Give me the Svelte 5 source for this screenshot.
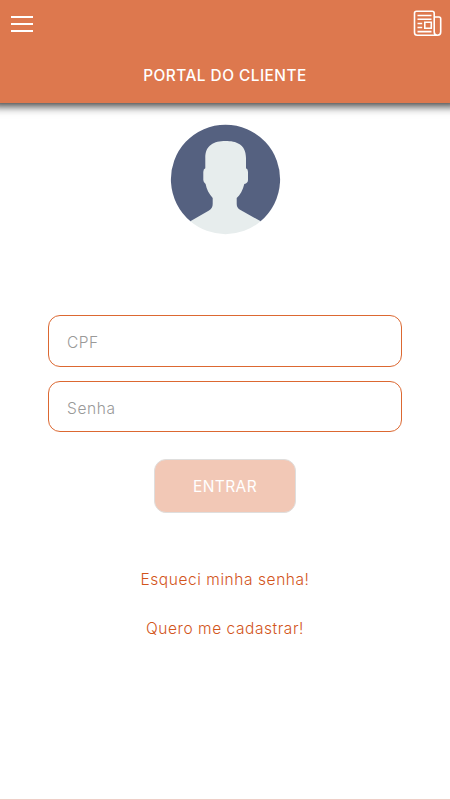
<script>
    let cpf = '';
    let senha = '';
    $: disabled = !cpf || !senha;
</script>

<style>
    :global(body) {
        background-color: #fff;
    }
    .portal {
        box-sizing: border-box;
        height: 800px;
        display: flex;
        flex-direction: column;
        align-items: center;
        border-bottom: 1px solid #efcdc6;
        font-family: Inter, "Open Sans", sans-serif;
        font-size: 15.5px;
    }
    header {
        width: 100%;
        height: 103px;
        background-color: #dd784e;
        box-shadow: 0 -6px 9px 9px rgba(0, 0, 0, 0.8);
        color: #fff;
    }
    .bar {
        box-sizing: border-box;
        height: 48px;
        display: flex;
        justify-content: space-between;
        padding: 10px 8px 0 11px;
    }
    button {
        font: inherit;
        color: inherit;
        background: none;
        border: none;
        padding: 0;
    }
    .bar button {
        display: block;
        height: 28px;
    }
    svg {
        display: block;
    }
    h1 {
        margin: 17px 0 0;
        text-align: center;
        font-size: 15.4px;
        line-height: 22px;
        font-weight: 500;
        letter-spacing: 0.47px;
    }
    .avatar {
        margin-top: 12px;
        width: 130px;
        height: 130px;
    }
    form {
        width: 354px;
        margin-top: 70px;
        display: flex;
        flex-direction: column;
        align-items: center;
    }
    input {
        box-sizing: border-box;
        width: 100%;
        height: 52px;
        margin: 0 0 14px;
        padding: 3px 18px 0;
        border: 1px solid #dc6831;
        border-radius: 12px;
        background-color: #fff;
        font: inherit;
        font-weight: 300;
    }
    input::placeholder {
        color: #999;
        opacity: 1;
    }
    .enter {
        box-sizing: border-box;
        width: 142px;
        height: 54px;
        margin: 13px 0 0;
        border: 1px solid #dfdedd;
        border-radius: 12px;
        background-color: #f2c8b6;
        color: #fff;
        letter-spacing: 0.4px;
    }
    .links {
        margin-top: 55px;
        display: flex;
        flex-direction: column;
        align-items: center;
        gap: 25px;
        line-height: 24px;
        font-weight: 300;
    }
    .links a {
        color: #d2551b;
        text-decoration: none;
    }
    .cpf {
        letter-spacing: 0.5px;
    }
    .senha {
        height: 51px;
        letter-spacing: 0.6px;
    }
    .forgot {
        letter-spacing: 0.57px;
    }
    .register {
        letter-spacing: 0.55px;
    }
</style>

<div class="portal">
    <header>
        <div class="bar">
            <button aria-label="Menu">
                <svg width="22" height="28" viewBox="0 0 22 28" fill="#fff">
                    <path d="M0 6h22v2H0zM0 13h22v2H0zM0 20h22v2H0z" />
                </svg>
            </button>
            <button aria-label="Notícias">
                <svg width="29" height="28" viewBox="0 0 29 28" fill="none" stroke="#fff" stroke-width="1.6">
                    <path d="M21.2 21V3.2Q21.2 1.2 19.2 1.2H3.5Q1.5 1.2 1.5 3.2V22.5Q1.5 25.2 4.2 25.2H24.5Q27.7 25.2 27.7 22V8.7Q27.7 7 26 7H21.2M21.2 21V22Q21.2 25.2 24.5 25.2" />
                    <path d="M4.5 5.5h14M4.5 9.3h14M4.5 13.5h4.7M4.5 17.5h4.7M4.5 21.6h14" />
                    <path d="M11.8 12.2h6.5v6h-6.5z" />
                </svg>
            </button>
        </div>
        <h1>PORTAL DO CLIENTE</h1>
    </header>

    <svg class="avatar" viewBox="0 0 130 130">
        <!-- background stops at the shoulders, the bust closes the circle -->
        <path fill="#556180" d="M30.5 106.2A54.6 54.6 0 1 1 100.5 106.2Z" />
        <path
            fill="#e7eded"
            d="M65.5 26C76 26 86 29 86 43V53.3Q88 54 88 57V65Q88 68 84.3 69C83 75 80 80 76.7 83V89Q76.7 93 80.5 95L100.7 106.3A54.7 54.7 0 0 1 30.3 106.3L49 95.5Q52.7 93 52.7 89V83C49 79 46.5 74 45.6 69Q43.3 67 43.3 65V57Q43.3 54 45.3 53.3V43C45.3 30 54 26 65.5 26Z"
        />
    </svg>

    <form on:submit|preventDefault>
        <input class="cpf" placeholder="CPF" bind:value={cpf} />
        <input class="senha" type="password" placeholder="Senha" bind:value={senha} />
        <button class="enter" {disabled}>ENTRAR</button>
    </form>

    <div class="links">
        <a class="forgot" href="#senha">Esqueci minha senha!</a>
        <a class="register" href="#cadastro">Quero me cadastrar!</a>
    </div>
</div>
